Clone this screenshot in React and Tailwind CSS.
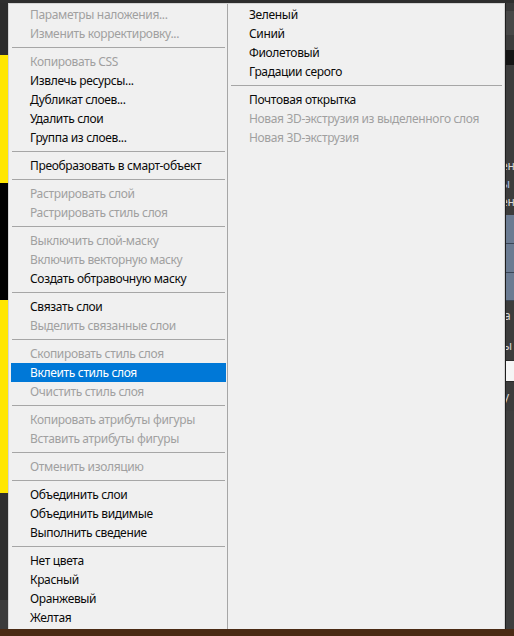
import React from 'react';
import clsx from 'clsx';

// groups of [label, state]; state: 0 = normal, 1 = disabled, 2 = hovered
const leftGroups = [
    [["Параметры наложения...", 1], ["Изменить корректировку...", 1]],
    [["Копировать CSS", 1], ["Извлечь ресурсы...", 0], ["Дубликат слоев...", 0], ["Удалить слои", 0], ["Группа из слоев...", 0]],
    [["Преобразовать в смарт-объект", 0]],
    [["Растрировать слой", 1], ["Растрировать стиль слоя", 1]],
    [["Выключить слой-маску", 1], ["Включить векторную маску", 1], ["Создать обтравочную маску", 0]],
    [["Связать слои", 0], ["Выделить связанные слои", 1]],
    [["Скопировать стиль слоя", 1], ["Вклеить стиль слоя", 2], ["Очистить стиль слоя", 1]],
    [["Копировать атрибуты фигуры", 1], ["Вставить атрибуты фигуры", 1]],
    [["Отменить изоляцию", 1]],
    [["Объединить слои", 0], ["Объединить видимые", 0], ["Выполнить сведение", 0]],
    [["Нет цвета", 0], ["Красный", 0], ["Оранжевый", 0], ["Желтая", 0]],
];

const rightGroups = [
    [["Зеленый", 0], ["Синий", 0], ["Фиолетовый", 0], ["Градации серого", 0]],
    [["Почтовая открытка", 0], ["Новая 3D-экструзия из выделенного слоя", 1], ["Новая 3D-экструзия", 1]],
];

const MenuItem = ({ label, state }) => (
    <div
        className={clsx(
            "h-[19px] flex items-center pl-[19px] ml-[2px] mr-[1px] whitespace-nowrap",
            state === 2 && "bg-[#0078d7] text-white",
            state === 1 && "text-[#a0a0a0]",
            state === 0 && "text-[#0a0a0a]"
        )}
    >
        {label}
    </div>
);

const Separator = () => (
    <div className="py-[4px] ml-[3px] mr-[2px]">
        <div className="h-px bg-[#a6a6a6]" />
    </div>
);

const MenuColumn = ({ groups, className }) => (
    <div className={clsx("flex flex-col pt-[1px]", className)}>
        {groups.map((group, gi) => (
            <React.Fragment key={gi}>
                {gi > 0 && <Separator />}
                {group.map(([label, state]) => (
                    <MenuItem key={label} label={label} state={state} />
                ))}
            </React.Fragment>
        ))}
    </div>
);

const App = () => {
    return (
        <div className="w-[514px] h-[636px] flex flex-col overflow-hidden bg-[#2b2b2b] font-['Noto_Sans',sans-serif] text-[12px] leading-none">
            <div className="h-[3px] bg-[#2e2e2e]" />
            <div className="h-[626px] flex">
                {/* canvas edge on the left */}
                <div className="w-[8px] flex flex-col">
                    <div className="h-[52px] bg-[#2c2c2c]" />
                    <div className="h-[128px] bg-[#ffe600]" />
                    <div className="h-[117px] bg-black" />
                    <div className="h-[193px] bg-[#ffe600]" />
                    <div className="h-[107px] bg-[#2f2f2f]" />
                    <div className="flex-1 bg-[#3b3b3b]" />
                </div>

                {/* context menu */}
                <div className="w-[497px] flex bg-[#f0f0f0] border border-b-0 border-[#d4d4d4] tracking-[-0.34px]">
                    <MenuColumn groups={leftGroups} className="w-[219px] border-r border-[#a6a6a6]" />
                    <MenuColumn groups={rightGroups} className="flex-1" />
                </div>

                {/* panels peeking out on the right */}
                <div className="w-[9px] flex flex-col border-l border-[#1e1e1e] text-[#d8d8d8] overflow-hidden">
                    <div className="h-[8px] bg-[#3a3a3a]" />
                    <div className="h-[24px] bg-[#474747]" />
                    <div className="h-[15px] bg-[#3c3c3c]" />
                    <div className="h-[15px] bg-[#151515]" />
                    <div className="h-[95px] bg-[#3c3c3c]" />
                    <div className="h-[55px] bg-[#3c3c3c] flex flex-col gap-[6px] -ml-[5px]">
                        <span>ен</span>
                        <span className="text-[#a9c4ee]">ы</span>
                        <span>ен</span>
                    </div>
                    <div className="h-[29px] bg-[#6b7b92] border-b border-[#3b4656]" />
                    <div className="h-[29px] bg-[#6b7b92] border-b border-[#3b4656]" />
                    <div className="h-[28px] bg-[#6b7b92] border-b border-[#3b4656]" />
                    <div className="h-[30px] bg-[#3c3c3c] flex items-center -ml-[2px]">а</div>
                    <div className="h-[30px] bg-[#3c3c3c] flex items-center -ml-[3px] border-b border-[#2a2a2a]">ы</div>
                    <div className="h-[20px] bg-[#f5f5f5]" />
                    <div className="h-[30px] bg-[#3c3c3c] flex items-center -ml-[3px] border-t border-[#2a2a2a]">у</div>
                    <div className="flex-1 bg-[#3e3e3e]" />
                </div>
            </div>
            <div className="flex-1 bg-[#4a2a14]" />
        </div>
    );
};

export default App;
